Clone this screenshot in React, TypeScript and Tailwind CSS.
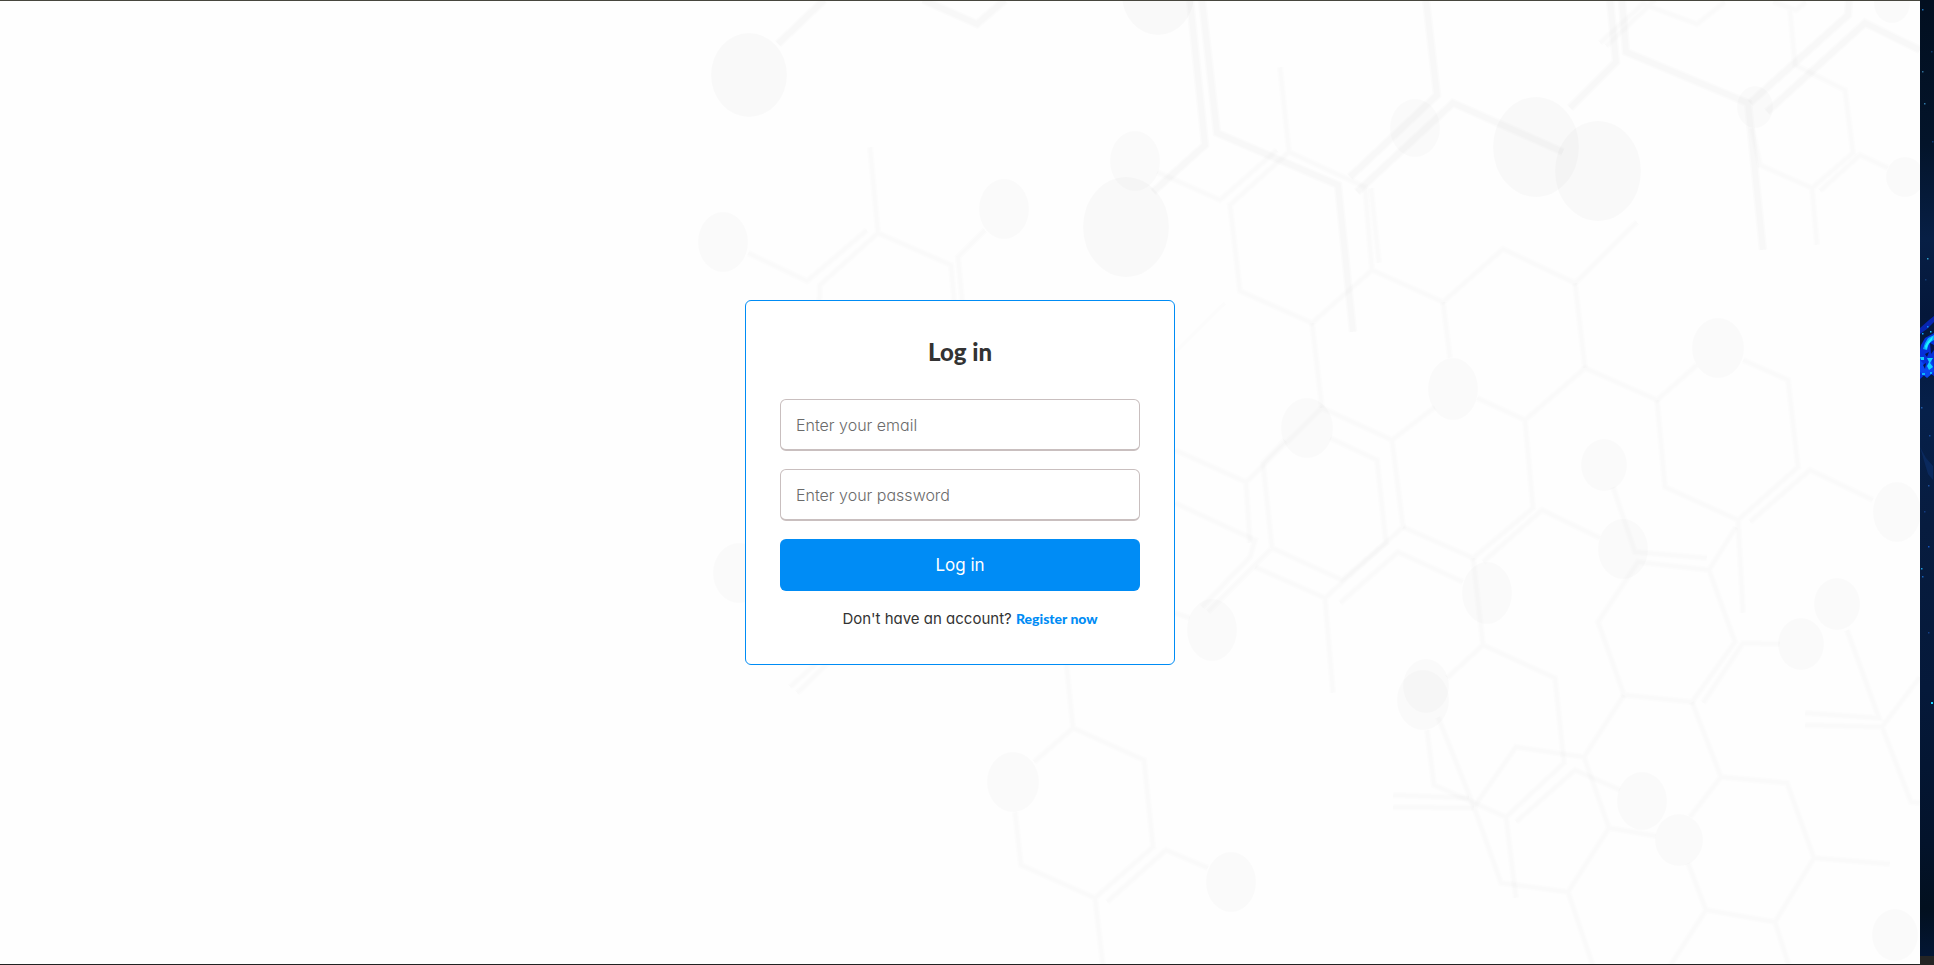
import React from "react";

type Ball = [cx: number, cy: number, rx: number, ry: number];

const darkBalls: Ball[] = [
  [749, 75, 38, 42],
  [1158, -5, 36, 40],
  [1126, 227, 43, 50],
  [1536, 147, 43, 50],
  [1598, 171, 43, 50],
];

const lightBalls: Ball[] = [
  [1135, 161, 25, 30],
  [1004, 209, 25, 30],
  [723, 242, 25, 30],
  [1415, 128, 25, 29],
  [1905, 177, 19, 20],
  [1892, 3, 18, 20],
  [1755, 107, 18, 21],
  [1718, 348, 26, 30],
  [1307, 428, 26, 30],
  [1453, 389, 25, 31],
  [1212, 630, 25, 31],
  [1487, 593, 25, 31],
  [1426, 686, 23, 27],
  [1423, 700, 26, 30],
  [1897, 512, 24, 30],
  [1604, 465, 23, 26],
  [1623, 549, 25, 30],
  [1837, 604, 23, 26],
  [1801, 644, 23, 26],
  [1642, 801, 25, 29],
  [1679, 840, 24, 26],
  [1895, 935, 23, 26],
  [739, 573, 26, 30],
  [1013, 782, 26, 30],
  [1231, 882, 25, 30],
];

const thickBonds: string[] = [
  "M824 0L778 44",
  "M923 0L977 24L1005 0",
  "M1190 0L1205 145L1153 192",
  "M1202 0L1217 133L1338 185L1353 332",
  "M1426 0L1437 95L1350 177",
  "M1357 192L1453 103L1563 152",
  "M1610 0L1616 62L1570 108",
  "M1622 0L1626 52L1748 103L1763 250",
  "M1849 0L1848 15L1750 103",
  "M1767 112L1865 23L1920 50",
];

const thinBonds: string[] = [
  "M748 253L807 281L867 230",
  "M870 147L878 233M819 310L820 285L878 233L951 265L955 310",
  "M985 230L958 257L963 310",
  "M1157 172L1220 200L1277 150",
  "M1280 67L1289 152L1365 187L1372 270M1289 152L1230 205L1240 291L1312 323L1372 270L1443 302L1503 249L1575 283L1637 222",
  "M1371 188L1379 263",
  "M1575 283L1585 368M1443 302L1450 358M1312 323L1322 408",
  "M1600 43L1643 4L1697 24L1725 2M1606 46L1655 0",
  "M1773 2L1796 10L1806 2M1790 10L1795 65L1845 90L1853 153L1812 188L1760 165L1752 128M1812 188L1817 245",
  "M1820 191L1860 155L1888 168",
  "M1175 450L1246 482L1322 408L1392 440L1435 407M1246 482L1250 543M1392 440L1403 527L1325 598L1255 567M1325 598L1333 693",
  "M1175 503L1255 540L1250 557L1202 607",
  "M1208 612L1272 548L1263 463L1285 440M1272 548L1342 580L1386 543L1377 460L1330 438",
  "M1340 603L1398 552L1463 582",
  "M1403 527L1473 558L1533 508L1525 420L1477 398M1525 420L1585 368L1657 400L1697 365",
  "M1483 562L1542 510L1600 538",
  "M1473 558L1483 645L1555 678L1564 763L1506 817L1434 785L1427 730M1483 645L1447 678M1506 817L1516 898",
  "M1175 613L1190 618",
  "M1657 400L1665 487L1738 520L1798 467L1788 380L1743 360M1738 520L1743 613",
  "M1750 522L1810 470L1873 500",
  "M1736 527L1709 570L1735 642L1692 702L1624 695L1598 622L1638 562L1709 570",
  "M1613 487L1635 552L1707 558",
  "M1703 703L1743 643L1780 644",
  "M1624 695L1584 757L1516 747L1474 807L1438 717M1584 757L1609 828L1656 836M1609 828L1568 892L1501 883L1474 807M1568 892L1593 966",
  "M1692 702L1721 777L1690 817M1721 777L1787 783L1814 858L1775 922L1706 910L1688 863M1814 858L1890 864M1775 922L1789 966M1706 910L1670 966",
  "M1393 795L1469 798M1393 807L1474 808",
  "M1516 822L1575 770L1620 790",
  "M1847 630L1879 718L1805 713",
  "M1805 725L1882 727L1920 677M1882 727L1911 802L1920 803",
  "M820 660L790 687M831 660L797 693",
  "M1066 660L1073 728L1144 760L1153 847L1095 898L1021 865L1015 812M1073 728L1034 762M1095 898L1103 966",
  "M1107 902L1166 850L1208 868",
];

function MoleculeBackdrop() {
  return (
    <svg
      aria-hidden="true"
      viewBox="0 1 1920 963"
      preserveAspectRatio="xMidYMid slice"
      className="absolute inset-0 h-full w-full"
    >
      <g fill="#000" fillOpacity="0.021">
        {darkBalls.map(([cx, cy, rx, ry]) => (
          <ellipse key={`${cx}-${cy}`} cx={cx} cy={cy} rx={rx} ry={ry} />
        ))}
      </g>
      <g fill="#000" fillOpacity="0.017">
        {lightBalls.map(([cx, cy, rx, ry]) => (
          <ellipse key={`${cx}-${cy}`} cx={cx} cy={cy} rx={rx} ry={ry} />
        ))}
      </g>
      <g fill="none" stroke="#000" strokeOpacity="0.011" strokeWidth="9">
        {thickBonds.map((d) => (
          <path key={d} d={d} />
        ))}
      </g>
      <g fill="none" stroke="#000" strokeOpacity="0.011" strokeWidth="6">
        {thickBonds.map((d) => (
          <path key={d} d={d} />
        ))}
      </g>
      <g fill="none" stroke="#000" strokeOpacity="0.008" strokeWidth="7">
        {thinBonds.map((d) => (
          <path key={d} d={d} />
        ))}
      </g>
      <g fill="none" stroke="#000" strokeOpacity="0.009" strokeWidth="4">
        {thinBonds.map((d) => (
          <path key={d} d={d} />
        ))}
        <path d="M1225 303L1175 352" />
      </g>
    </svg>
  );
}

const stars: [x: number, y: number, color: string][] = [
  [2, 9, "#1c6fb5"],
  [11, 51, "#123a66"],
  [2, 71, "#2d6d96"],
  [4, 103, "#2f78a6"],
  [12, 141, "#103a70"],
  [7, 258, "#2fa0c8"],
  [5, 279, "#123a70"],
  [2, 333, "#0aa8ff"],
  [7, 326, "#0a8cff"],
  [10, 331, "#14c8ff"],
  [1, 407, "#1c58a8"],
  [9, 435, "#174b9a"],
  [8, 485, "#1d4f9c"],
  [4, 511, "#123a80"],
  [8, 546, "#1555c0"],
  [1, 568, "#1b9be0"],
  [2, 576, "#1560b8"],
  [8, 632, "#123f86"],
];

function SpaceStrip() {
  return (
    <aside aria-hidden="true" className="flex w-3.5 shrink-0 flex-col bg-[#04142b]">
      <div className="relative flex-1">
        <svg
          viewBox="0 0 14 956"
          preserveAspectRatio="none"
          className="absolute inset-0 h-full w-full"
        >
          <defs>
            <linearGradient id="sky" x1="0" y1="0" x2="0" y2="1">
              <stop offset="0" stopColor="#020f20" />
              <stop offset="0.15" stopColor="#03142a" />
              <stop offset="0.25" stopColor="#071f45" />
              <stop offset="0.33" stopColor="#04173a" />
              <stop offset="0.43" stopColor="#06204a" />
              <stop offset="0.55" stopColor="#071c3f" />
              <stop offset="0.72" stopColor="#05193a" />
              <stop offset="0.88" stopColor="#03132b" />
              <stop offset="0.95" stopColor="#02101f" />
              <stop offset="1" stopColor="#031634" />
            </linearGradient>
          </defs>
          <rect width="14" height="956" fill="url(#sky)" />
          <path d="M0 328L9 320L14 316V322L7 329L0 334Z" fill="#0725b0" />
          <path d="M1 345L5 338L14 333V376L8 372L0 379V350Z" fill="#0530d8" />
          <path d="M0 360L6 366L12 360L14 372L7 378L0 372Z" fill="#0a48f0" />
          <path d="M3 349L5 343L8 338L14 335V340L9 343L7 350Z" fill="#08a8ff" />
          <path d="M5 346L8 341L13 336L12 340L8 345L6 350Z" fill="#1cf0ff" />
          <path d="M0 357H4V360H1ZM7 358H13L10 363L13 367L9 370L7 366L9 362Z" fill="#12cfff" />
          <path d="M10 343L14 345V350L11 354ZM5 354L9 352L7 357ZM3 365L6 363L5 369Z" fill="#04154a" />
          <path d="M2 373H5V375H2ZM10 372H12V374H10Z" fill="#0ab4ff" />
          <path d="M0 447L6 458L13 466V480L8 474L5 464Z" fill="#0d3476" fillOpacity="0.5" />
          {stars.map(([x, y, color]) => (
            <rect key={`${x}-${y}`} x={x} y={y} width="1.5" height="1.5" fill={color} />
          ))}
          <rect x="11" y="702" width="2" height="2" fill="#19d3ff" />
        </svg>
      </div>
      <div className="h-[9px] bg-[#242424]" />
    </aside>
  );
}

const fieldClass =
  "block h-[52px] w-full rounded-md border border-b-2 border-[#c9bfbf] bg-white px-[15px] text-base text-[#333333] outline-none placeholder:font-light placeholder:text-[#6b6b6b] focus:border-[#008cf5]";

function LoginCard() {
  return (
    <section className="relative m-4 w-full max-w-[430px] rounded-md border border-[#008cf5] bg-white px-[34px] pt-[31px] pb-[33px]">
      <h1 className="text-center font-['Lato',sans-serif] text-2xl leading-10 font-black text-[#333333]">
        Log in
      </h1>
      <form className="mt-[27px] flex flex-col gap-[18px]" onSubmit={(e) => e.preventDefault()}>
        <input
          type="email"
          aria-label="Email"
          placeholder="Enter your email"
          className={fieldClass}
        />
        <input
          type="password"
          aria-label="Password"
          placeholder="Enter your password"
          className={fieldClass}
        />
        <button
          type="submit"
          className="h-[52px] w-full cursor-pointer rounded-md bg-[#008cf5] pt-0.5 text-[17px] text-white"
        >
          Log in
        </button>
      </form>
      <p className="mt-4 pl-5 text-center text-[15px] leading-6 text-[#333333]">
        Don't have an account?{" "}
        <a href="#register" className="font-['Lato',sans-serif] text-sm font-black text-[#008cf5]">
          Register now
        </a>
      </p>
    </section>
  );
}

export default function App() {
  return (
    <div className="flex min-h-screen font-['Inter',sans-serif] [font-feature-settings:'cv11']">
      <main className="relative flex flex-1 items-center justify-center overflow-hidden border-t border-b border-t-[#47463e] border-b-[#222222] bg-[#fefefe]">
        <MoleculeBackdrop />
        <LoginCard />
      </main>
      <SpaceStrip />
    </div>
  );
}
